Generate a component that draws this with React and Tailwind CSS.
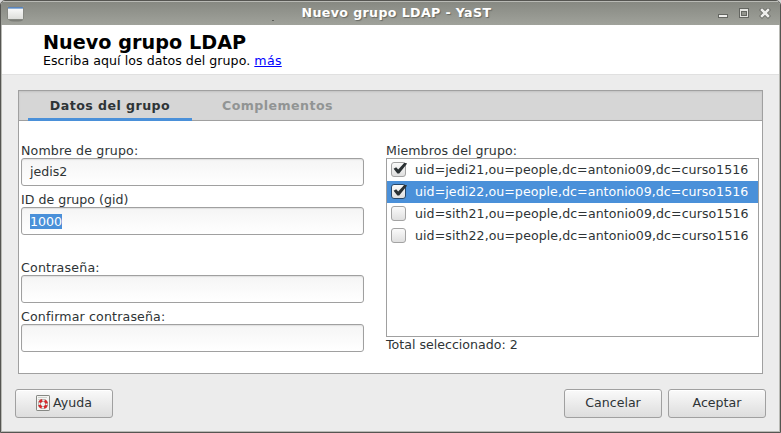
import React from "react";

const members = [
  { id: "uid=jedi21,ou=people,dc=antonio09,dc=curso1516", checked: true, selected: false },
  { id: "uid=jedi22,ou=people,dc=antonio09,dc=curso1516", checked: true, selected: true },
  { id: "uid=sith21,ou=people,dc=antonio09,dc=curso1516", checked: false, selected: false },
  { id: "uid=sith22,ou=people,dc=antonio09,dc=curso1516", checked: false, selected: false },
];

function WindowIcon() {
  return (
    <svg width="18" height="17" viewBox="0 0 18 17" className="mt-[2px] shrink-0">
      <defs>
        <linearGradient id="win" x1="0" y1="0" x2="0" y2="1">
          <stop offset="0" stopColor="#ffffff" />
          <stop offset="1" stopColor="#dcddd9" />
        </linearGradient>
      </defs>
      <ellipse cx="9" cy="14" rx="7" ry="1.6" fill="#6f716b" opacity="0.7" />
      <rect x="0.5" y="0.5" width="16" height="13" rx="0.6" fill="url(#win)" stroke="#868882" />
      <rect x="1" y="1" width="15" height="1" fill="#5b86bd" />
      <rect x="1" y="2" width="15" height="1" fill="#8fb0d8" />
    </svg>
  );
}

function WindowControls() {
  return (
    <svg width="54" height="11" viewBox="0 0 54 11" shapeRendering="crispEdges">
      <rect x="1.5" y="6.5" width="9" height="3" fill="#eeeeec" stroke="#646661" />
      <rect x="22.5" y="0.5" width="9" height="9" fill="#e4e5e1" stroke="#646661" />
      <rect x="24.5" y="3.5" width="5" height="4" fill="#92948d" stroke="#646661" />
      <g shapeRendering="auto">
        <path d="M45 2 L51 8 M51 2 L45 8" stroke="#6c6e69" strokeWidth="4.2" strokeLinecap="square" />
        <path d="M45 2 L51 8 M51 2 L45 8" stroke="#eeeeec" strokeWidth="2.5" strokeLinecap="square" />
      </g>
    </svg>
  );
}

function HelpIcon() {
  return (
    <svg width="14" height="16" viewBox="0 0 14 16" className="mb-px shrink-0">
      <rect x="0.5" y="0.5" width="13" height="15" rx="0.6" fill="#f4f4f2" stroke="#858783" />
      <path d="M2 2.5H11M2 4.5H5" stroke="#d0d2cd" />
      <circle cx="7" cy="9" r="3.6" fill="#f4f4f2" stroke="#858783" strokeWidth="2.8" />
      <circle cx="7" cy="9" r="3.6" fill="none" stroke="#efefed" strokeWidth="1.8" />
      <circle cx="7" cy="9" r="3.7" fill="none" stroke="#d9282b" strokeWidth="2.6" strokeDasharray="3.4 2.412" strokeDashoffset="-1.21" />
    </svg>
  );
}

function Checkbox({ checked, selected }) {
  return (
    <svg width="18" height="16" viewBox="0 1 18 16" className="shrink-0">
      <defs>
        <linearGradient id="box" x1="0" y1="0" x2="0" y2="1">
          <stop offset="0" stopColor="#fbfbfb" />
          <stop offset="1" stopColor="#dedede" />
        </linearGradient>
      </defs>
      <rect x="0.5" y="1.5" width="14" height="14" rx="2.5" fill="url(#box)" stroke={selected ? "#26476b" : "#a3a3a3"} />
      {checked && <path d="M2.6 7.8 L5.2 6.2 L7.2 8.6 L13.4 1.8 L16.2 2.4 L8.2 12.4 L6.4 12.4 Z" fill="#2b3134" />}
    </svg>
  );
}

function Field({ label, children }) {
  return (
    <label className="flex flex-col">
      <span className="h-[15px] whitespace-nowrap leading-[15px]">{label}</span>
      <span className="flex h-[28px] items-center rounded-[3px] border border-[#a0a0a0] bg-linear-to-b from-[#f5f5f5] to-white pl-2 shadow-[inset_0_1px_1px_#e0e0e0]">
        {children}
      </span>
    </label>
  );
}

function Button({ children }) {
  return (
    <button className="flex h-[29px] w-[98px] items-center justify-center gap-[3px] rounded-[3px] border border-[#a0a0a0] bg-linear-to-b from-[#fafafa] to-[#dddddd] shadow-[inset_0_1px_0_#ffffff]">
      {children}
    </button>
  );
}

export default function App() {
  return (
    <div className="h-[433px] w-[781px] bg-[#d9d9d9] font-['DejaVu_Sans',sans-serif] text-[12.6px] text-[#2e3436]">
      <div className="flex h-full flex-col overflow-hidden rounded-t-[5px] border border-[#555551] bg-[#ececec]">
        <header className="relative flex h-[24px] shrink-0 items-center border-t border-[#b9bab5] bg-linear-to-b from-[#878982] to-[#a0a29b] pl-[6px] pr-[9px]">
          <WindowIcon />
          <span className="absolute left-[271px] top-[18px] h-px w-[2px] bg-[#5c5e59]" />
          <h1 className="flex-1 pl-[51px] text-center text-[12.6px] font-bold tracking-[0.38px] text-white [text-shadow:1px_1px_1px_#666862]">
            Nuevo grupo LDAP - YaST
          </h1>
          <WindowControls />
        </header>

        <div className="flex min-h-0 flex-1 flex-col border-x border-b border-[#b9bab5]">
          <section className="h-[50px] shrink-0 border-b border-[#e0e0e0] bg-white pl-[41px] pt-[7px] text-black">
            <h2 className="h-[21px] text-[19.2px] font-bold leading-[21px] tracking-[0.03px]">Nuevo grupo LDAP</h2>
            <p className="leading-[15px] tracking-[0.05px]">
              Escriba aquí los datos del grupo. <a className="tracking-[0.3px] text-[#0000ff] underline">más</a>
            </p>
          </section>

          <main className="mx-4 mt-[15px] h-[284px] shrink-0 border border-[#a0a0a0] bg-white">
            <nav className="flex h-[30px] border-b border-[#a0a0a0] bg-[#d6d6d6] pl-[9px] font-bold tracking-[0.45px] shadow-[inset_0_1px_2px_#c3c3c3]">
              <span className="flex h-[30px] w-[164px] items-center justify-center border-b-[3px] border-[#4a90d9] pt-[3px]">Datos del grupo</span>
              <span className="flex h-[30px] w-[171px] items-center justify-center text-[#919494]">Complementos</span>
            </nav>
            <div className="flex gap-[22px] pl-[2px] pt-[22px]">
              <div className="flex w-[343px] flex-col gap-[6px]">
                <Field label={<span className="tracking-[0.15px]">Nombre de grupo:</span>}>jedis2</Field>
                <Field label="ID de grupo (gid)">
                  <span className="h-[15px] bg-[#4a90d9] leading-[15px] text-white">1000</span>
                </Field>
                <div className="h-[13px]" />
                <Field label={<span className="tracking-[0.2px]">Contraseña:</span>} />
                <Field label={<span className="tracking-[0.15px]">Confirmar contraseña:</span>} />
              </div>
              <div className="w-[373px]">
                <div className="h-[15px] leading-[15px] tracking-[0.06px]">Miembros del grupo:</div>
                <ul className="h-[179px] border border-[#a0a0a0] bg-white tracking-[0.06px]">
                  {members.map((m) => (
                    <li
                      key={m.id}
                      className={
                        m.selected
                          ? "flex h-[22px] items-center gap-[6px] whitespace-nowrap bg-[#4a90d9] pl-1 text-white"
                          : "flex h-[22px] items-center gap-[6px] whitespace-nowrap pl-1"
                      }
                    >
                      <Checkbox checked={m.checked} selected={m.selected} />
                      {m.id}
                    </li>
                  ))}
                </ul>
                <div className="h-[15px] leading-[15px]">Total seleccionado: 2</div>
              </div>
            </div>
          </main>

          <footer className="mt-[15px] flex gap-[6px] px-[13px]">
            <Button>
              <HelpIcon />
              Ayuda
            </Button>
            <div className="flex-1" />
            <Button>Cancelar</Button>
            <Button>Aceptar</Button>
          </footer>
        </div>
      </div>
    </div>
  );
}
